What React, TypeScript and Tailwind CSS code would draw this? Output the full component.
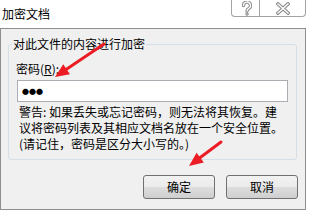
import React from "react";

const font = { fontFamily: '"Noto Sans CJK SC", "Microsoft YaHei", sans-serif' };

function Arrow({ x1, y1, x2, y2 }: { x1: number; y1: number; x2: number; y2: number }) {
  const dx = x2 - x1;
  const dy = y2 - y1;
  const len = Math.hypot(dx, dy);
  const ux = dx / len;
  const uy = dy / len;
  const bx = x2 - 14 * ux;
  const by = y2 - 14 * uy;
  const nx = -uy;
  const ny = ux;
  const pts = `${x2},${y2} ${bx + 6 * nx},${by + 6 * ny} ${bx - 6 * nx},${by - 6 * ny}`;
  return (
    <g>
      <line x1={x1} y1={y1} x2={bx + 2 * ux} y2={by + 2 * uy} stroke="#ec1c24" strokeWidth={3} strokeLinecap="round" />
      <polygon points={pts} fill="#ec1c24" />
    </g>
  );
}

function HelpGlyph() {
  const d = "M3.5 4.5 a3.5 3.5 0 1 1 5 3.2 c-1 0.5 -1.5 1.1 -1.5 2.3";
  return (
    <svg width="12" height="15" viewBox="0 0 12 15">
      <path d={d} fill="none" stroke="#8a8a8a" strokeWidth={3.4} strokeLinecap="round" />
      <circle cx="7" cy="13" r="1.7" fill="#8a8a8a" />
      <path d={d} fill="none" stroke="#fff" strokeWidth={1.3} strokeLinecap="round" />
      <circle cx="7" cy="13" r="0.6" fill="#fff" />
    </svg>
  );
}

function CloseGlyph() {
  const d = "M2 2 L12 11 M12 2 L2 11";
  return (
    <svg width="14" height="13" viewBox="0 0 14 13">
      <path d={d} fill="none" stroke="#8a8a8a" strokeWidth={3.6} strokeLinecap="square" />
      <path d={d} fill="none" stroke="#fff" strokeWidth={1.4} strokeLinecap="square" />
    </svg>
  );
}

function DlgButton({ children }: { children: React.ReactNode }) {
  return (
    <button className="w-[72px] h-[24px] rounded-[3px] border border-[#707070] bg-[linear-gradient(#f2f2f2_0%,#ebebeb_48%,#dddddd_52%,#cfcfcf_100%)] text-[12px] leading-[16px] text-black flex items-center justify-center">
      {children}
    </button>
  );
}

export default function App() {
  return (
    <div className="relative w-[309px] h-[214px] bg-white overflow-hidden text-black" style={font}>
      {/* Title bar */}
      <div className="flex h-[28px] pr-[3px]">
        <div className="ml-[2px] mt-[6px] text-[12px] leading-[16px]">加密文档</div>
        <div className="ml-auto flex self-start">
          <div className="w-[29px] h-[17px] border border-t-0 border-[#a3a3a3] rounded-bl-[4px] flex items-center justify-center">
            <HelpGlyph />
          </div>
          <div className="w-[46px] h-[17px] border border-t-0 border-l-0 border-[#a3a3a3] rounded-br-[4px] flex items-center justify-center">
            <CloseGlyph />
          </div>
        </div>
      </div>

      {/* Body */}
      <div className="w-[306px] h-[182px] border border-[#8e8e8e] bg-[#f0f0f0] flex flex-col">
        <fieldset className="mt-[7px] ml-[7px] w-[289px] border border-[#d5dfe5] rounded-[3px] p-0">
          <legend className="ml-[3px] px-[1px] text-[12px] leading-[16px]">对此文件的内容进行加密</legend>
          <div className="pl-[7px] pb-[7px]">
            <div className="mt-[9px] text-[12px] leading-[16px]">
              密码(<span className="underline">R</span>):
            </div>
            <div className="mt-[3px] ml-px w-[271px] h-[22px] border border-[#abadb3] bg-white flex items-center pl-[4px] text-[7px] leading-[8px]">
              ●●●
            </div>
            <div className="mt-[2px] ml-[3px] text-[12px] leading-[16px] whitespace-nowrap">
              <div>警告: 如果丢失或忘记密码，则无法将其恢复。建</div>
              <div>议将密码列表及其相应文档名放在一个安全位置。</div>
              <div>(请记住，密码是区分大小写的。)</div>
            </div>
          </div>
        </fieldset>
        <div className="mt-[15px] flex justify-end gap-[11px] pr-[7px]">
          <DlgButton>确定</DlgButton>
          <DlgButton>取消</DlgButton>
        </div>
      </div>

      {/* Annotation arrows */}
      <svg className="absolute inset-0 pointer-events-none" width="309" height="214" viewBox="0 0 309 214">
        <Arrow x1={104} y1={44} x2={55} y2={77} />
        <Arrow x1={221} y1={142} x2={189} y2={166} />
      </svg>
    </div>
  );
}
